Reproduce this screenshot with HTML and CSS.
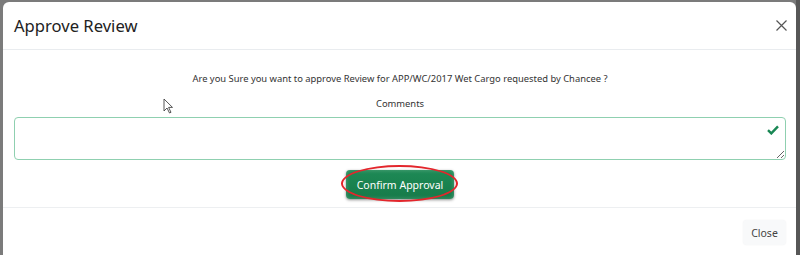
FILE: index.html
```html
<!DOCTYPE html>
<html lang="en">
<head>
    <meta charset="UTF-8">
    <meta name="viewport" content="width=device-width, initial-scale=1.0">
    <title>Approve Review</title>
<link rel="stylesheet" href="styles.css">
</head>
<body>
    <div class="backdrop">
        <div class="modal_box">
            <div class="modal_head">
                <h5 class="modal_title">Approve Review</h5>
                <button class="btn_x" type="button" aria-label="Close">
                    <svg width="11" height="11" viewBox="0 0 11 11">
                        <path d="M0.5 0.5L10.5 10.5M10.5 0.5L0.5 10.5" stroke="#555" stroke-width="1.2" fill="none"/>
                    </svg>
                </button>
            </div>
            <div class="modal_body">
                <p class="question">Are you Sure you want to approve Review for APP/WC/2017 Wet Cargo requested by Chancee ?</p>
                <label class="comment_label" for="comments">Comments</label>
                <div class="field_wrap">
                    <textarea id="comments" class="comment_box"></textarea>
                    <svg class="valid_icon" width="12" height="10" viewBox="0 0 12 10">
                        <path d="M1 5.2L4.3 8.4L11 1.4" stroke="#198754" stroke-width="2.4" fill="none"/>
                    </svg>
                </div>
                <div class="confirm_row">
                    <span class="mark">
                        <button class="btn_confirm" type="button">Confirm Approval</button>
                    </span>
                </div>
                <svg class="cursor" width="10" height="16" viewBox="0 0 10 16">
                    <path d="M1 1L1 13L4 10L6.5 15L8 14.3L5.6 9.4L9.5 9.4Z" fill="#fff" stroke="#444" stroke-width="0.9"/>
                </svg>
            </div>
            <div class="modal_foot">
                <button class="btn_close" type="button">Close</button>
            </div>
        </div>
    </div>
</body>
</html>
```

FILE: styles.css
```css
*{
    margin: 0;
    box-sizing: border-box;
}
body{
    background-color: #7b7b7b;
    font-family: "Noto Sans", "Open Sans", sans-serif;
    color: #212529;
    overflow: hidden;
}
.backdrop{
    height: 255px;
    padding: 2px 0 0 3px;
    border-right: 4px solid #575757;
}
.modal_box{
    position: relative;
    width: 793px;
    height: 300px;
    background-color: #fff;
    border-radius: 6px 6px 0 0;
}
.modal_head{
    display: flex;
    align-items: center;
    justify-content: space-between;
    height: 48px;
    padding: 0 9px 0 11px;
    border-bottom: 1px solid #e9ecef;
}
.modal_title{
    font-size: 16.6px;
    font-weight: 400;
    color: #222;
    padding-bottom: 1px;
}
.btn_x{
    border: none;
    background: none;
    padding: 0;
    width: 11px;
    height: 11px;
    display: flex;
}
.modal_body{
    position: relative;
    padding: 20px 10px 8px 11px;
    text-align: center;
    font-size: 9.4px;
    color: #333;
}
.question{
    line-height: 18px;
}
.comment_label{
    display: block;
    margin-top: 7px;
    line-height: 18px;
}
.field_wrap{
    position: relative;
    margin-top: 4px;
}
.comment_box{
    display: block;
    width: 100%;
    height: 43px;
    border: 1px solid #8fd0b0;
    border-radius: 4px;
    resize: vertical;
    outline: none;
}
.valid_icon{
    position: absolute;
    right: 7px;
    top: 8px;
}
.confirm_row{
    display: flex;
    justify-content: center;
    margin-top: 10px;
}
.mark{
    position: relative;
    display: inline-block;
}
.mark::after{
    content: '';
    position: absolute;
    left: -5px;
    right: -4px;
    top: -5px;
    bottom: -3px;
    border: 2px solid #e3262c;
    border-radius: 50%;
}
.btn_confirm{
    display: block;
    width: 108px;
    height: 29px;
    padding: 0;
    border: none;
    border-radius: 4px;
    background: linear-gradient(#1e8a56, #167a49);
    box-shadow: 0 1px 3px rgba(0,0,0,0.45), inset 0 0 4px rgba(255,255,255,0.25);
    color: #fff;
    font-family: "Noto Sans", "Open Sans", sans-serif;
    font-size: 10.5px;
}
.cursor{
    position: absolute;
    left: 160px;
    top: 48px;
}
.modal_foot{
    display: flex;
    justify-content: flex-end;
    padding: 12px 10px 0 0;
    border-top: 1px solid #edeff1;
}
.btn_close{
    width: 43px;
    height: 25px;
    padding: 0;
    border: none;
    border-radius: 4px;
    background-color: #f8f9fa;
    box-shadow: 0 0 2px rgba(0,0,0,0.06);
    color: #444;
    font-family: "Noto Sans", "Open Sans", sans-serif;
    font-size: 10.5px;
}
```
